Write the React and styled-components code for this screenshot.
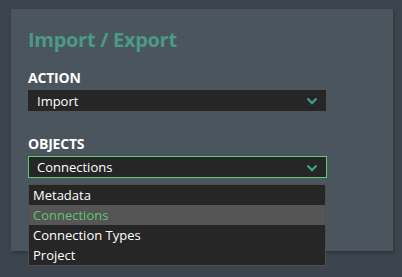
import React, { useState } from 'react';
import styled, { createGlobalStyle } from 'styled-components';

const GlobalStyle = createGlobalStyle`
  html, body {
    margin: 0;
    padding: 0;
    background: #3c454d;
    font-family: "Open Sans", "Noto Sans", sans-serif;
  }
`;

const actions = ['Import', 'Export'];
const objects = ['Metadata', 'Connections', 'Connection Types', 'Project'];

function Chevron() {
  return (
    <svg width="12" height="8" viewBox="0 0 12 8">
      <polyline points="1.5,1.5 6,6 10.5,1.5" fill="none" stroke="#3f9c88" strokeWidth="2.4" />
    </svg>
  );
}

function App() {
  const [action] = useState(actions[0]);
  const [selected, setSelected] = useState('Connections');
  const [hover, setHover] = useState('Connections');

  return (
    <>
      <GlobalStyle />
      <Page>
        <Panel>
          <Title>Import / Export</Title>
          <Label>ACTION</Label>
          <Select>
            <span>{action}</span>
            <Chevron />
          </Select>
          <Label $gap>OBJECTS</Label>
          <Field>
            <Select $open>
              <span>{selected}</span>
              <Chevron />
            </Select>
            <Menu>
              {objects.map((o) => (
                <Option
                  key={o}
                  $active={o === hover}
                  onMouseEnter={() => setHover(o)}
                  onClick={() => setSelected(o)}
                >
                  {o}
                </Option>
              ))}
            </Menu>
          </Field>
        </Panel>
      </Page>
    </>
  );
}

const Page = styled.div`
  width: 402px;
  height: 277px;
  padding: 9px 9px 0 11px;
  box-sizing: border-box;
`;

const Panel = styled.div`
  width: 382px;
  height: 242px;
  box-sizing: border-box;
  padding: 19px 17px 0 17px;
  background: #4a555e;
  box-shadow: 1px 2px 4px rgba(0, 0, 0, 0.25);
`;

const Title = styled.h2`
  margin: 0;
  font-size: 20px;
  font-weight: 700;
  line-height: 24px;
  color: #4b9a85;
  letter-spacing: -0.3px;
`;

const Label = styled.div`
  margin-top: ${(p) => (p.$gap ? '24px' : '17px')};
  font-size: 14px;
  font-weight: 700;
  line-height: 18px;
  color: #ffffff;
  letter-spacing: -0.2px;
`;

const Field = styled.div`
  position: relative;
`;

const Select = styled.div`
  margin-top: ${(p) => (p.$open ? '3px' : '3px')};
  width: ${(p) => (p.$open ? '299px' : '298px')};
  height: ${(p) => (p.$open ? '22px' : '21px')};
  box-sizing: border-box;
  display: flex;
  align-items: center;
  justify-content: space-between;
  padding: 0 8px 0 ${(p) => (p.$open ? '8px' : '9px')};
  background: #262626;
  border: ${(p) => (p.$open ? '1px solid #5ccb72' : 'none')};
  color: #ffffff;
  font-size: 13px;
  cursor: pointer;

  svg {
    margin-top: 1px;
  }
`;

const Menu = styled.div`
  position: absolute;
  top: 28px;
  left: 0;
  width: 298px;
  box-sizing: border-box;
  background: #262626;
  border: 1px solid #4f4f4f;
  z-index: 2;
`;

const Option = styled.div`
  height: 20px;
  line-height: 20px;
  padding-left: 4px;
  font-size: 13px;
  color: ${(p) => (p.$active ? '#5ec46f' : '#ffffff')};
  background: ${(p) => (p.$active ? '#555555' : 'transparent')};
  cursor: pointer;
`;

export default App;
